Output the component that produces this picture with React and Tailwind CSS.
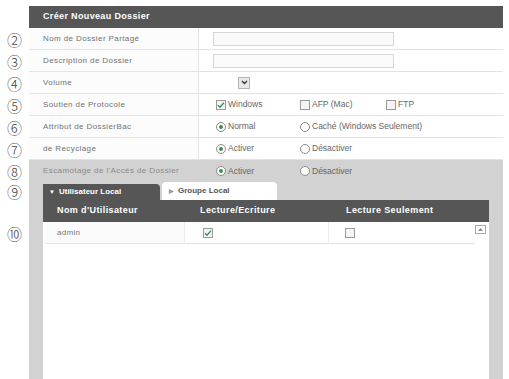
import React from "react";

const font = "font-['Liberation_Sans',Arial,sans-serif]";

const Num = ({ n }) => (
  <div className="w-[29px] h-full shrink-0 flex items-center justify-center text-[15px] leading-[15px] text-[#444] font-['Noto_Sans_CJK_JP',sans-serif] font-light">
    {n}
  </div>
);

const Check = ({ on }) => (
  <span className="inline-flex w-[10px] h-[10px] border border-[#9a9a9a] bg-[#f4f4f4] items-center justify-center shrink-0">
    {on && (
      <svg width="8" height="8" viewBox="0 0 8 8">
        <path d="M1 4.2 L3 6.2 L7 1.6" stroke="#3f8f4f" strokeWidth="1.4" fill="none" />
      </svg>
    )}
  </span>
);

const Radio = ({ on }) => (
  <span className="inline-flex w-[10px] h-[10px] rounded-full border border-[#8a8a8a] bg-white items-center justify-center shrink-0">
    {on && <span className="w-[4px] h-[4px] rounded-full bg-[#3f8f4f]" />}
  </span>
);

const Opt = ({ children, w }) => (
  <div className={`flex items-center gap-[2px] text-[8.5px] text-[#666] ${w}`}>{children}</div>
);

const Row = ({ n, label, children }) => (
  <div className="flex h-[22px]">
    <Num n={n} />
    <div className="w-[474px] flex border-b border-[#e3e3e3] bg-white">
      <div className="w-[170px] shrink-0 border-r border-[#e3e3e3] bg-[#fcfcfc] flex items-center pl-[14px] text-[8px] tracking-[0.4px] text-[#707070]">
        {label}
      </div>
      <div className="flex-1 flex items-center">{children}</div>
    </div>
  </div>
);

export default function App() {
  return (
    <div className={`w-[509px] h-[379px] overflow-hidden bg-white pt-[6px] ${font}`}>
      {/* header */}
      <div className="flex h-[22px]">
        <div className="w-[29px]" />
        <div className="w-[474px] bg-[#565656] flex items-center pl-[14px] text-[9px] font-bold tracking-[0.35px] text-white">
          Créer Nouveau Dossier
        </div>
      </div>

      <Row n="②" label="Nom de Dossier Partagé">
        <div className="ml-[14px] w-[181px] h-[14px] border border-[#d6d6d6] bg-[#fafafa]" />
      </Row>
      <Row n="③" label="Description de Dossier">
        <div className="ml-[14px] w-[181px] h-[14px] border border-[#d6d6d6] bg-[#fafafa]" />
      </Row>
      <Row n="④" label="Volume">
        <div className="ml-[39px] w-[12px] h-[12px] border border-[#b5b5b5] bg-[#e8e8e8] flex items-center justify-center">
          <svg width="7" height="5" viewBox="0 0 7 5">
            <path d="M1 1 L3.5 3.5 L6 1" stroke="#333" strokeWidth="1.3" fill="none" />
          </svg>
        </div>
      </Row>
      <Row n="⑤" label="Soutien de Protocole">
        <div className="pl-[17px] flex items-center">
          <Opt w="w-[84px]"><Check on />Windows</Opt>
          <Opt w="w-[86px]"><Check />AFP (Mac)</Opt>
          <Opt w=""><Check />FTP</Opt>
        </div>
      </Row>
      <Row n="⑥" label="Attribut de DossierBac">
        <div className="pl-[17px] flex items-center">
          <Opt w="w-[84px]"><Radio on />Normal</Opt>
          <Opt w=""><Radio />Caché (Windows Seulement)</Opt>
        </div>
      </Row>
      <Row n="⑦" label="de Recyclage">
        <div className="pl-[17px] flex items-center">
          <Opt w="w-[84px]"><Radio on />Activer</Opt>
          <Opt w=""><Radio />Désactiver</Opt>
        </div>
      </Row>

      {/* grey section */}
      <div className="flex">
        <div className="w-[29px] flex flex-col">
          <div className="h-[22px] flex"><Num n="⑧" /></div>
          <div className="h-[18px] flex"><Num n="⑨" /></div>
          <div className="h-[22px]" />
          <div className="h-[22px] flex"><Num n="⑩" /></div>
        </div>
        <div className="w-[474px] h-[260px] bg-[#d2d2d2] flex flex-col">
          <div className="h-[22px] flex items-center">
            <div className="w-[170px] pl-[14px] text-[8px] tracking-[0.4px] text-[#8a8a8a]">
              Escamotage de l'Accès de Dossier
            </div>
            <div className="pl-[17px] flex items-center">
              <Opt w="w-[84px]"><Radio on />Activer</Opt>
              <Opt w=""><Radio />Désactiver</Opt>
            </div>
          </div>

          <div className="mx-[14px] flex flex-col flex-1">
            {/* tabs */}
            <div className="h-[18px] flex items-end gap-[2px]">
              <div className="w-[117px] h-[16px] bg-[#565656] rounded-tr-[4px] flex items-center pl-[6px] gap-[4px] text-[8px] font-bold text-white">
                <span className="text-[6px]">▼</span>Utilisateur Local
              </div>
              <div className="w-[115px] h-[18px] bg-white rounded-t-[4px] flex items-center pl-[7px] gap-[4px] text-[8px] font-bold text-[#555]">
                <span className="text-[6px] text-[#999]">▶</span>Groupe Local
              </div>
            </div>
            {/* table header */}
            <div className="h-[22px] bg-[#565656] flex items-center text-[9px] font-bold tracking-[0.4px] text-white">
              <div className="w-[142px] pl-[14px]">Nom d'Utilisateur</div>
              <div className="w-[144px] pl-[15px]">Lecture/Ecriture</div>
              <div className="pl-[17px]">Lecture Seulement</div>
            </div>
            {/* body */}
            <div className="flex-1 bg-white flex">
              <div className="flex-1 flex flex-col">
                <div className="h-[22px] ml-[2px] flex items-center border-b border-[#e3e3e3]">
                  <div className="w-[140px] h-full pl-[12px] flex items-center bg-[#fbfbfb] border-r border-[#eeeeee] text-[8px] tracking-[0.3px] text-[#777]">
                    admin
                  </div>
                  <div className="w-[144px] h-full pl-[18px] flex items-center border-r border-[#eeeeee]">
                    <Check on />
                  </div>
                  <div className="pl-[16px] flex items-center">
                    <Check />
                  </div>
                </div>
              </div>
              <div className="w-[14px] pt-[3px] pr-[2px]">
                <div className="w-[11px] h-[9px] border border-[#aaa] bg-white flex items-center justify-center">
                  <svg width="5" height="3" viewBox="0 0 5 3">
                    <path d="M0 3 L2.5 0 L5 3 Z" fill="#888" />
                  </svg>
                </div>
              </div>
            </div>
          </div>
        </div>
      </div>
    </div>
  );
}
